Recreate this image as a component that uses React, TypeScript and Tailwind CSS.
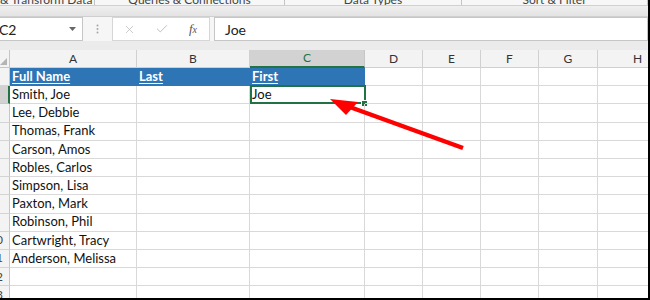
import * as React from 'react';
import { X, Check } from 'lucide-react';

// 列の定義（幅はスクリーンショットから）
const columns = [
  { id: 'A', w: 'w-[127px]' },
  { id: 'B', w: 'w-[113px]' },
  { id: 'C', w: 'w-[115px]' },
  { id: 'D', w: 'w-[58px]' },
  { id: 'E', w: 'w-[58px]' },
  { id: 'F', w: 'w-[58px]' },
  { id: 'G', w: 'w-[59px]' },
  { id: 'H', w: 'w-[80px]' },
];

const names = [
  'Smith, Joe',
  'Lee, Debbie',
  'Thomas, Frank',
  'Carson, Amos',
  'Robles, Carlos',
  'Simpson, Lisa',
  'Paxton, Mark',
  'Robinson, Phil',
  'Cartwright, Tracy',
  'Anderson, Melissa',
];

const headerCells = ['Full Name', 'Last', 'First'];

const groups = [
  { label: 'Get & Transform Data', cls: 'ml-[-24px] w-[119px]' },
  { label: 'Queries & Connections', cls: 'w-[190px]' },
  { label: 'Data Types', cls: 'w-[177px]' },
  { label: 'Sort & Filter', cls: 'w-[186px]' },
];

const font = { fontFamily: 'Lato, "Liberation Sans", sans-serif' };

const RowHeader: React.FC<{ n: number; active?: boolean }> = ({ n, active }) => (
  <div
    className={
      'w-[27px] ml-[-17px] shrink-0 h-full flex items-center justify-center text-[12px] border-b ' +
      (active
        ? 'bg-[#d2d2d2] text-[#217346] border-b-[#c8c8c8] border-r-2 border-r-[#217346]'
        : 'bg-[#f3f3f3] text-[#444] border-b-[#d4d4d4] border-r border-r-[#c6c6c6]')
    }
  >
    {n}
  </div>
);

const App: React.FC = () => {
  return (
    <div
      className="relative w-[650px] h-[300px] overflow-hidden bg-white border-r-2 border-b-2 border-black"
      style={font}
    >
      {/* リボンのグループ名（上端で切れている） */}
      <div className="h-[5px] overflow-hidden bg-[#f7f7f7] flex text-[12px] text-[#444] border-b border-[#d0d0d0] box-content">
        {groups.map((g) => (
          <div key={g.label} className={g.cls + ' shrink-0 flex justify-center border-r border-[#c4c4c4]'}>
            <span className="block leading-none mt-[-6px] whitespace-nowrap">{g.label}</span>
          </div>
        ))}
      </div>
      <div className="h-[10px] bg-gradient-to-b from-[#efefef] to-[#e3e3e3] border-b border-[#cfcfcf] box-content" />

      {/* 数式バー */}
      <div className="h-[24px] flex bg-[#f6f6f6]">
        <div className="ml-[-10px] w-[93px] h-[24px] shrink-0 bg-white border border-[#c6c6c6] flex items-center pl-[8px] pr-[6px] justify-between">
          <span className="text-[14px] text-[#222]">C2</span>
          <svg width="7" height="4" viewBox="0 0 7 4">
            <path d="M0 0 L7 0 L3.5 4 Z" fill="#666" />
          </svg>
        </div>
        <div className="w-[29px] shrink-0 flex items-center justify-center">
          <svg width="3" height="10" viewBox="0 0 3 10">
            <circle cx="1.5" cy="1.5" r="1" fill="#a6a6a6" />
            <circle cx="1.5" cy="5" r="1" fill="#a6a6a6" />
            <circle cx="1.5" cy="8.5" r="1" fill="#a6a6a6" />
          </svg>
        </div>
        <div className="w-[98px] h-[24px] shrink-0 bg-white border border-[#d6d6d6] flex items-center">
          <div className="w-[33px] flex justify-center">
            <X size={13} strokeWidth={1.3} color="#b5b5b5" />
          </div>
          <div className="w-[32px] flex justify-center">
            <Check size={14} strokeWidth={1.5} color="#b5b5b5" />
          </div>
          <div className="w-[30px] flex justify-center">
            <span
              className="text-[13px] italic text-[#555]"
              style={{ fontFamily: '"Liberation Serif", serif' }}
            >
              f<span className="text-[10px]">x</span>
            </span>
          </div>
        </div>
        <div className="ml-[4px] flex-1 h-[24px] bg-white border border-[#c6c6c6] flex items-center pl-[10px]">
          <span className="text-[14px] text-[#222]">Joe</span>
        </div>
      </div>
      <div className="h-[9px] bg-[#ebebeb]" />

      {/* 列見出し */}
      <div className="h-[18px] flex">
        <div className="w-[27px] ml-[-17px] shrink-0 h-full bg-[#f3f3f3] border-r border-b border-[#c6c6c6] relative">
          <svg className="absolute right-[2px] bottom-[2px]" width="7" height="7" viewBox="0 0 7 7">
            <path d="M7 0 L7 7 L0 7 Z" fill="#b4b4b4" />
          </svg>
        </div>
        {columns.map((c) =>
          c.id === 'C' ? (
            <div
              key={c.id}
              className={c.w + ' shrink-0 h-full bg-[#d2d2d2] text-[#217346] border-r border-[#c6c6c6] border-b-2 border-b-[#217346] flex items-center justify-center text-[12px]'}
            >
              {c.id}
            </div>
          ) : (
            <div
              key={c.id}
              className={c.w + ' shrink-0 h-full bg-[#f3f3f3] text-[#333] border-r border-b border-[#d0d0d0] flex items-center justify-center text-[12px]'}
            >
              {c.id}
            </div>
          )
        )}
      </div>

      {/* 行1：見出し */}
      <div className="h-[18.2px] flex text-[13px]">
        <RowHeader n={1} />
        {columns.map((c, i) =>
          i < 3 ? (
            <div
              key={c.id}
              className={c.w + ' shrink-0 h-full bg-[#2e75b6] flex items-center pl-[2px] text-white font-bold underline underline-offset-2'}
            >
              {headerCells[i]}
            </div>
          ) : (
            <div key={c.id} className={c.w + ' shrink-0 h-full border-r border-b border-[#d9d9d9]'} />
          )
        )}
      </div>

      {/* データ行 */}
      {[...names, '', ''].map((name, r) => (
        <div key={r} className="h-[18.2px] flex text-[13px] text-[#111]">
          <RowHeader n={r + 2} active={r === 0} />
          {columns.map((c, i) => (
            <div
              key={c.id}
              className={c.w + ' shrink-0 h-full border-r border-b border-[#d9d9d9] flex items-center pl-[2px] whitespace-nowrap relative'}
            >
              {i === 0 ? name : ''}
              {r === 0 && i === 2 && (
                <>
                  <span>Joe</span>
                  <div className="absolute left-0 top-[-1px] w-[116px] h-[19px] border-2 border-[#217346]" />
                  <div className="absolute right-[-3px] bottom-[-3px] w-[5px] h-[5px] bg-[#217346] outline outline-1 outline-white" />
                </>
              )}
            </div>
          ))}
        </div>
      ))}

      {/* 赤い矢印 */}
      <svg className="absolute left-0 top-0 pointer-events-none" width="650" height="300" viewBox="0 0 650 300">
        <line x1="463" y1="148" x2="347" y2="106" stroke="#ff0000" strokeWidth="4.5" />
        <polygon points="330,99 358,102 346,115" fill="#ff0000" />
      </svg>
    </div>
  );
};

export default App;
